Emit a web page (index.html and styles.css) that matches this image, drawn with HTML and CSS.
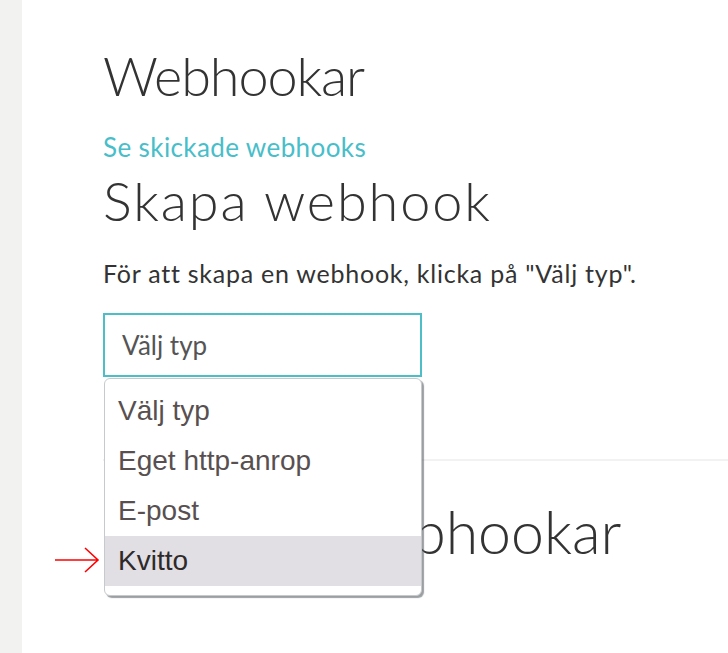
FILE: index.html
```html
<!DOCTYPE html>
<html lang="sv">
<head>
<meta charset="utf-8">
<title>Webhookar</title>
<link rel="stylesheet" href="styles.css">
</head>
<body>
<div class="page">
  <aside class="sidebar"></aside>
  <main class="main">
    <h1 class="title title-main">Webhookar</h1>
    <a class="link" href="#">Se skickade webhooks</a>
    <h1 class="title title-create">Skapa webhook</h1>
    <p class="intro">För att skapa en webhook, klicka på "Välj typ".</p>
    <div class="select-wrap">
      <div class="select">Välj typ</div>
      <ul class="dropdown">
        <li class="option">Välj typ</li>
        <li class="option">Eget http-anrop</li>
        <li class="option">E-post</li>
        <li class="option option-active">Kvitto</li>
      </ul>
      <svg class="arrow" width="46" height="26" viewBox="0 0 46 26">
        <path d="M1 13 H44 M31 1 L44 13 L31 25" fill="none" stroke="#ff0000" stroke-width="1.6"/>
      </svg>
    </div>
    <hr class="divider">
    <h2 class="subtitle">Skickade webhookar</h2>
  </main>
</div>
</body>
</html>
```
FILE: styles.css
```css
html, body {
  margin: 0;
  padding: 0;
  background: #ffffff;
}
.page {
  display: flex;
  min-height: 653px;
}
.sidebar {
  width: 22px;
  flex: 0 0 22px;
  background: #f2f3f1;
}
.main {
  flex: 1;
  padding: 44px 0 0 81px;
  font-family: Lato, "Liberation Sans", sans-serif;
  color: #333333;
}
.title {
  margin: 0;
  font-size: 54px;
  line-height: 64px;
  font-weight: 300;
  color: #333333;
}
.title-main {
  letter-spacing: -1.1px;
}
.link {
  display: block;
  margin-top: 21px;
  font-size: 26px;
  line-height: 36px;
  letter-spacing: 0.4px;
  color: #47bec9;
  text-decoration: none;
}
.title-create {
  margin-top: 4px;
  letter-spacing: 1.9px;
}
.intro {
  margin: 23px 0 0;
  font-size: 25px;
  line-height: 34px;
  letter-spacing: 0.75px;
  color: #333333;
}
.select-wrap {
  position: relative;
  width: 319px;
  margin-top: 23px;
}
.select {
  box-sizing: border-box;
  height: 64px;
  border: 2px solid #4dbdc8;
  padding-left: 17px;
  font-size: 26px;
  line-height: 60px;
  color: #555555;
}
.dropdown {
  position: absolute;
  top: 65px;
  left: 1px;
  box-sizing: border-box;
  width: 318px;
  margin: 0;
  padding: 7px 0 9px;
  list-style: none;
  background: #ffffff;
  border: 1px solid #c7cacd;
  border-radius: 6px;
  box-shadow: 2px 2px 1px rgba(90, 95, 98, 0.6);
  font-family: "Liberation Sans", Arial, sans-serif;
  font-size: 28px;
  z-index: 2;
}
.option {
  height: 50px;
  line-height: 50px;
  padding-left: 13px;
  color: #585050;
}
.option-active {
  background: #e1dfe3;
  color: #2e2a2a;
}
.arrow {
  position: absolute;
  left: -49px;
  top: 234px;
}
.divider {
  margin: 82px 0 0;
  border: 0;
  height: 2px;
  background: #f2f2f2;
}
.subtitle {
  margin: 36px 0 0;
  font-size: 59px;
  line-height: 70px;
  font-weight: 300;
  color: #333333;
}
```
